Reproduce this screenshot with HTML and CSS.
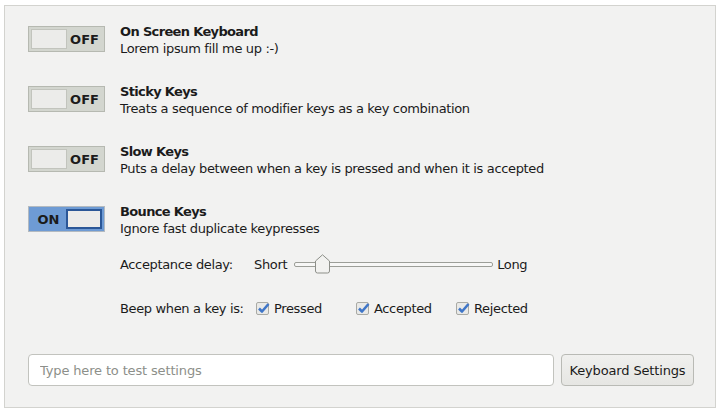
FILE: index.html
```html
<!DOCTYPE html>
<html>
<head>
<meta charset="utf-8">
<link rel="stylesheet" href="styles.css">
</head>
<body>
<div class="panel">
  <div class="row">
    <div class="switch off"><span class="knob"></span><span class="lbl">OFF</span></div>
    <div class="text">
      <div class="title">On Screen Keyboard</div>
      <div class="sub">Lorem ipsum fill me up :-)</div>
    </div>
  </div>
  <div class="row">
    <div class="switch off"><span class="knob"></span><span class="lbl">OFF</span></div>
    <div class="text">
      <div class="title">Sticky Keys</div>
      <div class="sub">Treats a sequence of modifier keys as a key combination</div>
    </div>
  </div>
  <div class="row">
    <div class="switch off"><span class="knob"></span><span class="lbl">OFF</span></div>
    <div class="text">
      <div class="title">Slow Keys</div>
      <div class="sub">Puts a delay between when a key is pressed and when it is accepted</div>
    </div>
  </div>
  <div class="row">
    <div class="switch on"><span class="lbl">ON</span><span class="knob"></span></div>
    <div class="text">
      <div class="title">Bounce Keys</div>
      <div class="sub">Ignore fast duplicate keypresses</div>
      <div class="opt delay">
        <span class="optlabel">Acceptance delay:</span>
        <span>Short</span>
        <span class="slider"><span class="track"></span><svg class="thumb" width="17" height="20" viewBox="0 0 17 20"><path d="M1.5 7 L8.5 0.8 L15.5 7 L15.5 17 Q15.5 19 13.5 19 L3.5 19 Q1.5 19 1.5 17 Z" fill="#f2f2f0" stroke="#8d8f89" stroke-width="1"/></svg></span>
        <span>Long</span>
      </div>
      <div class="opt beep">
        <span class="optlabel">Beep when a key is:</span>
        <span class="check first"><svg width="14" height="14" viewBox="0 0 14 14"><rect x="0.5" y="1.5" width="12" height="12" rx="1.5" fill="#e9e9e7" stroke="#a9aaa5"/><path d="M3 7.5 L6 10.5 L12.5 3" fill="none" stroke="#3f76c8" stroke-width="2.6" stroke-linejoin="round"/></svg>Pressed</span>
        <span class="check"><svg width="14" height="14" viewBox="0 0 14 14"><rect x="0.5" y="1.5" width="12" height="12" rx="1.5" fill="#e9e9e7" stroke="#a9aaa5"/><path d="M3 7.5 L6 10.5 L12.5 3" fill="none" stroke="#3f76c8" stroke-width="2.6" stroke-linejoin="round"/></svg>Accepted</span>
        <span class="check"><svg width="14" height="14" viewBox="0 0 14 14"><rect x="0.5" y="1.5" width="12" height="12" rx="1.5" fill="#e9e9e7" stroke="#a9aaa5"/><path d="M3 7.5 L6 10.5 L12.5 3" fill="none" stroke="#3f76c8" stroke-width="2.6" stroke-linejoin="round"/></svg>Rejected</span>
      </div>
    </div>
  </div>
  <div class="bottom">
    <input class="entry" type="text" placeholder="Type here to test settings">
    <button class="btn">Keyboard Settings</button>
  </div>
</div>
</body>
</html>
```

FILE: styles.css
```css
html, body {
  margin: 0;
  padding: 0;
  background: #ffffff;
}
body {
  font-family: "DejaVu Sans", sans-serif;
  font-size: 13px;
  letter-spacing: -0.35px;
  color: #1b1b1b;
}
.panel {
  margin: 5px 4px 0 4px;
  height: 403px;
  box-sizing: border-box;
  border: 1px solid #d3d3cf;
  background: #f2f2f1;
  padding: 17px 20px 0 23px;
  display: flex;
  flex-direction: column;
}
.row {
  display: flex;
  align-items: flex-start;
  gap: 15px;
  margin-bottom: 26px;
}
.switch {
  margin-top: 3px;
  width: 77px;
  height: 26px;
  box-sizing: border-box;
  border: 1px solid #b6b9b1;
  display: flex;
  align-items: center;
  padding: 2px;
  flex: none;
}
.switch.off { background: #d3d6cf; }
.switch.on { background: #6e9bd4; border-color: #b3bac0; }
.knob {
  width: 36px;
  height: 20px;
  box-sizing: border-box;
  background: #ececea;
  border: 1px solid #c2c4bd;
  flex: none;
}
.switch.on .knob { border: 2px solid #2b5797; margin-left: auto; }
.lbl {
  flex: 1;
  text-align: center;
  font-weight: bold;
  font-size: 13px;
  letter-spacing: 0;
  color: #1b1b1b;
}
.text { line-height: 17px; }
.title { font-weight: bold; letter-spacing: -0.65px; }
.opt {
  display: flex;
  align-items: center;
  height: 20px;
}
.delay { margin-top: 17px; }
.beep { margin-top: 24px; }
.optlabel { width: 134px; flex: none; }
.slider {
  position: relative;
  width: 199px;
  height: 20px;
  margin: 0 4px 0 7px;
}
.track {
  position: absolute;
  left: 0; right: 0;
  top: 8px;
  height: 5px;
  box-sizing: border-box;
  border: 1px solid #9c9e98;
  border-radius: 2px;
  background: #f7f7f6;
}
.thumb {
  position: absolute;
  left: 20px;
  top: 0;
}
.check {
  display: flex;
  align-items: center;
  width: 100px;
  flex: none;
}
.check.first { margin-left: 2px; }
.check svg { margin-right: 4px; }
.bottom {
  margin-top: auto;
  margin-bottom: 21px;
  display: flex;
  gap: 7px;
}
.entry {
  width: 526px;
  height: 32px;
  box-sizing: border-box;
  border: 1px solid #c2c3be;
  border-radius: 4px;
  background: #fff;
  padding: 0 11px;
  font-family: "DejaVu Sans", sans-serif;
  font-size: 13px;
  letter-spacing: -0.15px;
  color: #1b1b1b;
  outline: none;
  flex: none;
}
.entry::placeholder { color: #8d8f8a; }
.btn {
  width: 133px;
  height: 32px;
  box-sizing: border-box;
  border: 1px solid #b9bab5;
  border-radius: 4px;
  background: linear-gradient(#f0f0ee, #e6e6e3);
  font-family: "DejaVu Sans", sans-serif;
  font-size: 13px;
  letter-spacing: -0.15px;
  color: #1b1b1b;
  padding: 0;
  flex: none;
}
```
